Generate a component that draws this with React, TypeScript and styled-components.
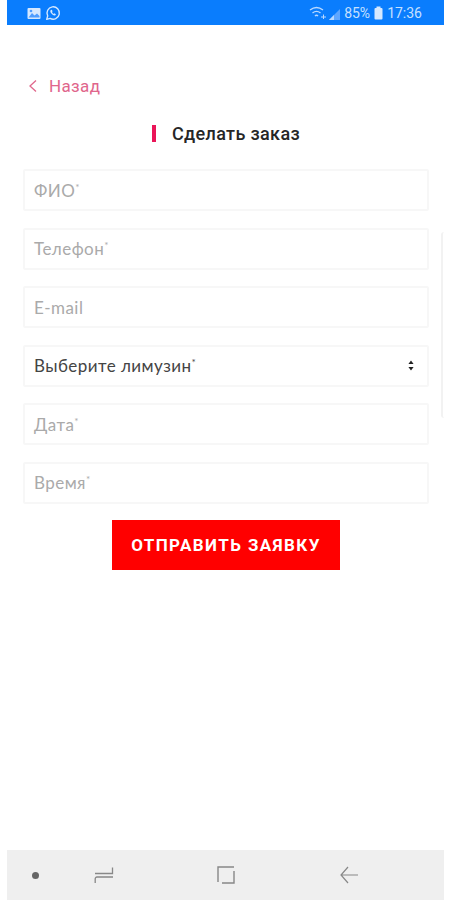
import { createGlobalStyle } from 'styled-components'
import styled from 'styled-components'

const GlobalStyle = createGlobalStyle`
  html, body {
    margin: 0;
    padding: 0;
    background: #fff;
    font-family: Roboto, "Liberation Sans", sans-serif;
  }
  * { box-sizing: border-box; }
`

const fields = [
  { label: 'ФИО', required: true },
  { label: 'Телефон', required: true },
  { label: 'E-mail', required: false },
  { label: 'Выберите лимузин', required: true, select: true },
  { label: 'Дата', required: true },
  { label: 'Время', required: true },
]

function App() {
  return (
    <>
      <GlobalStyle />
      <Screen>
        <StatusBar>
          <StatusGroup>
            <svg width="14" height="13" viewBox="0 0 14 13">
              <rect x="0.5" y="1" width="13" height="11" rx="1" fill="#d5e8ff" />
              <path d="M1.5 10.5 L5 6 L7.5 8.5 L10 6.5 L12.5 9 V10.5 Z" fill="#4f9dff" />
              <circle cx="4" cy="4" r="1.3" fill="#4f9dff" />
            </svg>
            <svg width="16" height="16" viewBox="0 0 16 16" fill="none">
              <path d="M1.7 14.4 L2.7 10.9 A6.2 6.2 0 1 1 5.1 13.4 Z" stroke="#d5e8ff" strokeWidth="1.4" strokeLinejoin="round" />
              <path d="M5.8 4.9 C5 5.6 5.1 7 6.4 8.6 C7.8 10.3 9.4 11 10.4 10.2 L10.9 9.3 L9.4 8.3 L8.7 8.9 C8 8.6 7.3 7.8 7 7 L7.6 6.3 L6.8 4.7 Z" fill="#d5e8ff" />
            </svg>
          </StatusGroup>
          <StatusGroup>
            <svg width="31" height="15" viewBox="0 0 31 15" fill="none">
              <path d="M1 4 C5 1 10 1 14 4 M3.5 7 C6 5 9 5 11.5 7 M6 10 C7 9 8 9 9 10" stroke="#b9d9ff" strokeWidth="1.4" />
              <path d="M12 11 H17 M14.5 8.5 V13" stroke="#b9d9ff" strokeWidth="1" />
              <path d="M20 14 L31 3 V14 Z" fill="#5ea6ff" />
              <path d="M20 14 L25 9 V14 Z" fill="#b9d9ff" />
            </svg>
            <StatusText>85%</StatusText>
            <svg width="9" height="14" viewBox="0 0 9 14">
              <rect x="0.5" y="2" width="8" height="11.5" rx="1" fill="#d5e8ff" />
              <rect x="2.5" y="0.5" width="4" height="2" fill="#d5e8ff" />
            </svg>
            <StatusText>17:36</StatusText>
          </StatusGroup>
        </StatusBar>

        <Content>
          <BackLink>
            <svg width="10" height="14" viewBox="0 0 10 14" fill="none">
              <path d="M8 1.5 L2 7 L8 12.5" stroke="#e0688c" strokeWidth="1.3" />
            </svg>
            Назад
          </BackLink>
          <TitleRow>
            <TitleMark />
            <Title>Сделать заказ</Title>
          </TitleRow>
          <Form>
            {fields.map((f) => (
              <Field key={f.label} $select={f.select}>
                <span>
                  {f.label}
                  {f.required && <Req>*</Req>}
                </span>
                {f.select && (
                  <svg width="6" height="11" viewBox="0 0 6 11">
                    <path d="M3 0.5 L5.6 4 H0.4 Z M3 10.5 L5.6 7 H0.4 Z" fill="#222" />
                  </svg>
                )}
              </Field>
            ))}
          </Form>
          <SubmitButton>ОТПРАВИТЬ ЗАЯВКУ</SubmitButton>
        </Content>

        <ScrollEdge />

        <NavBar>
          <NavDot />
          <svg width="20" height="20" viewBox="0 0 20 20" fill="none">
            <path d="M1 8.5 H18.5 V2.5 M19 12 H3 C1.8 12 1.2 12.8 1.2 14 V18" stroke="#888" strokeWidth="1.3" />
          </svg>
          <svg width="18" height="20" viewBox="0 0 18 20" fill="none">
            <path d="M1 17 V2 H17 M17 6 V18 H5" stroke="#888" strokeWidth="1.4" />
          </svg>
          <svg width="18" height="20" viewBox="0 0 18 20" fill="none">
            <path d="M8 2 L1 10 L8 18 M1 10 H18" stroke="#888" strokeWidth="1.2" />
          </svg>
        </NavBar>
      </Screen>
    </>
  )
}

export default App

const Screen = styled.div`
  position: relative;
  width: 450px;
  height: 900px;
  padding: 0 6px 0 7px;
  display: flex;
  flex-direction: column;
  overflow: hidden;
  background: #fff;
`

const StatusBar = styled.div`
  height: 25px;
  flex: none;
  padding: 1px 22px 0 20px;
  background: #0a7dfd;
  display: flex;
  align-items: center;
  justify-content: space-between;
`

const StatusGroup = styled.div`
  display: flex;
  align-items: center;
  gap: 4px;
`

const StatusText = styled.span`
  font-size: 14px;
  color: #c6e0ff;
`

const Content = styled.div`
  flex: 1;
  padding: 50px 15px 0 16px;
  display: flex;
  flex-direction: column;
`

const BackLink = styled.div`
  height: 22px;
  padding-left: 5px;
  display: flex;
  align-items: center;
  gap: 11px;
  font-size: 17px;
  letter-spacing: 0.35px;
  color: #e0668c;
`

const TitleRow = styled.div`
  margin-top: 25px;
  height: 22px;
  display: flex;
  align-items: center;
  justify-content: center;
  gap: 16px;
`

const TitleMark = styled.div`
  width: 4px;
  height: 17px;
  background: #ea1558;
`

const Title = styled.div`
  font-size: 18px;
  font-weight: 500;
  letter-spacing: 0.35px;
  color: #262626;
`

const Form = styled.div`
  margin-top: 25px;
  display: flex;
  flex-direction: column;
  gap: 16.6px;
`

const Field = styled.div<{ $select?: boolean }>`
  height: 42px;
  padding: 0 13px 0 9px;
  border: 2px solid #f7f7f7;
  border-radius: 2px;
  display: flex;
  align-items: center;
  justify-content: space-between;
  font-family: Lato, Roboto, sans-serif;
  font-size: 17px;
  letter-spacing: 0.45px;
  color: ${(p) => (p.$select ? '#444' : '#aaa')};
`

const Req = styled.sup`
  font-size: 10px;
  line-height: 0;
  vertical-align: 6px;
`

const SubmitButton = styled.button`
  align-self: center;
  margin-top: 16px;
  width: 228px;
  height: 50px;
  border: 0;
  background: #ff0000;
  color: #fff;
  font-family: Roboto, sans-serif;
  font-size: 17px;
  font-weight: 700;
  letter-spacing: 1.4px;
`

const ScrollEdge = styled.div`
  position: absolute;
  left: 441px;
  top: 232px;
  width: 3px;
  height: 186px;
  border-left: 2px solid #f2f2f2;
  border-radius: 3px 0 0 3px;
`

const NavBar = styled.div`
  height: 50px;
  flex: none;
  background: #efefef;
  display: grid;
  grid-template-columns: 56px 82px 162px 84px;
  justify-items: center;
  align-items: center;
`

const NavDot = styled.div`
  width: 7px;
  height: 7px;
  border-radius: 50%;
  background: #666;
`
